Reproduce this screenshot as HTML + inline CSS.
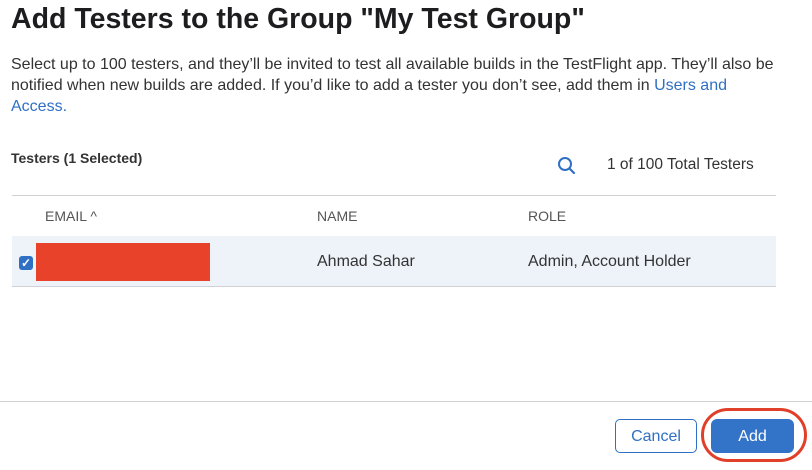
<!DOCTYPE html><html><head><style>
body{margin:0;width:812px;height:470px;background:#fff;font-family:"Liberation Sans",sans-serif;color:#1d1d1f;position:relative;overflow:hidden}
.a{position:absolute;white-space:nowrap}
</style></head><body>
<div class="a" style="left:11px;top:3px;font-size:28.5px;font-weight:bold">Add Testers to the Group "My Test Group"</div>
<div class="a" style="left:11px;top:54px;font-size:16px;line-height:21px;white-space:normal;width:772px;color:#333">Select up to 100 testers, and they’ll be invited to test all available builds in the TestFlight app. They’ll also be notified when new builds are added. If you’d like to add a tester you don’t see, add them in <span style="color:#2f6fc4">Users and Access.</span></div>
<div class="a" style="left:11px;top:150px;font-size:14px;font-weight:bold;color:#333">Testers (1 Selected)</div>
<svg class="a" style="left:556px;top:155px" width="22" height="22" viewBox="0 0 22 22"><circle cx="9" cy="9" r="6" fill="none" stroke="#2f6fc4" stroke-width="2"/><path d="M13.5 13.5L18 18" stroke="#2f6fc4" stroke-width="2.2" stroke-linecap="round"/></svg>
<div class="a" style="left:607px;top:156px;font-size:15.5px;color:#333">1 of 100 Total Testers</div>
<div class="a" style="left:12px;top:195px;width:764px;height:1px;background:#d0d0d5"></div>
<div class="a" style="left:45px;top:208px;font-size:14px;color:#555">EMAIL ^</div>
<div class="a" style="left:317px;top:208px;font-size:14px;color:#555">NAME</div>
<div class="a" style="left:528px;top:208px;font-size:14px;color:#555">ROLE</div>
<div class="a" style="left:12px;top:236px;width:764px;height:50px;background:#eef2f9;border-bottom:1px solid #d0d0d5"></div>
<div class="a" style="left:19px;top:256px;width:14px;height:14px;background:#2f6fc4;border-radius:3px;color:#fff;font-size:12px;line-height:14px;text-align:center;font-weight:bold">✓</div>
<div class="a" style="left:36px;top:243px;width:174px;height:38px;background:#e8432a"></div>
<div class="a" style="left:317px;top:253px;font-size:16px;color:#333">Ahmad Sahar</div>
<div class="a" style="left:528px;top:253px;font-size:16px;color:#333">Admin, Account Holder</div>
<div class="a" style="left:0;top:401px;width:812px;height:1px;background:#d0d0d5"></div>
<div class="a" style="left:615px;top:419px;width:80px;height:32px;border:1px solid #2f6fc4;border-radius:5px;color:#2f6fc4;font-size:16px;line-height:34px;text-align:center">Cancel</div>
<div class="a" style="left:711px;top:419px;width:83px;height:34px;background:#3374c9;border-radius:6px;color:#fff;font-size:16px;line-height:36px;text-align:center">Add</div>
<div class="a" style="left:701px;top:408px;width:106px;height:54px;border:3px solid #e0402a;border-radius:28px;box-sizing:border-box"></div>
</body></html>
